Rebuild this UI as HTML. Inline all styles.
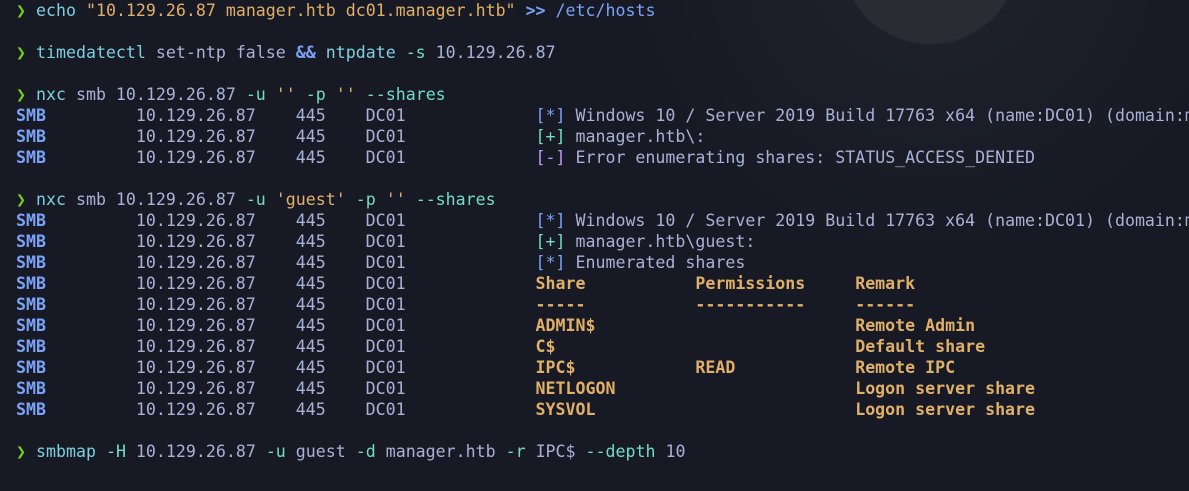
<!DOCTYPE html>
<html><head><meta charset="utf-8"><style>
html,body{margin:0;padding:0;width:1189px;height:491px;overflow:hidden;background:#171a24;}
.bg{position:absolute;inset:0;background:radial-gradient(circle at 930px -45px,#2a2d34 0,#292c33 88px,rgba(30,33,43,0.9) 90px,rgba(23,26,36,0) 300px),#171a24;}
pre{position:absolute;left:16px;top:0;width:1173px;overflow:hidden;margin:0;font-family:"DejaVu Sans Mono","Liberation Mono",monospace;font-size:16.6px;line-height:21px;color:#a9b1d6;white-space:pre;}
.p{color:#73d216}.c{color:#7dcfe0}.s{color:#e0af68}.b{color:#7aa2f7}.t{color:#73daca}.v{color:#bb9af7}
.smb{color:#7aa2f7;font-weight:bold}.y{color:#e0af68;font-weight:bold}.o{color:#7aa2f7;font-weight:bold}
</style></head><body><div class="bg"></div>
<pre><span class="p">❯</span> <span class="c">echo</span> <span class="s">"10.129.26.87 manager.htb dc01.manager.htb"</span> <span class="o">&gt;&gt;</span> <span class="b">/etc/hosts</span>

<span class="p">❯</span> <span class="c">timedatectl</span> set-ntp false <span class="o">&amp;&amp;</span> <span class="c">ntpdate</span> <span class="t">-s</span> 10.129.26.87

<span class="p">❯</span> <span class="c">nxc</span> smb 10.129.26.87 <span class="t">-u</span> <span class="s">''</span> <span class="t">-p</span> <span class="s">''</span> <span class="t">--shares</span>
<span class="smb">SMB</span>         10.129.26.87    445    DC01             <span class="b">[*]</span> Windows 10 / Server 2019 Build 17763 x64 (name:DC01) (domain:m
<span class="smb">SMB</span>         10.129.26.87    445    DC01             <span class="t">[+]</span> manager.htb\:
<span class="smb">SMB</span>         10.129.26.87    445    DC01             <span class="v">[-]</span> Error enumerating shares: STATUS_ACCESS_DENIED

<span class="p">❯</span> <span class="c">nxc</span> smb 10.129.26.87 <span class="t">-u</span> <span class="s">'guest'</span> <span class="t">-p</span> <span class="s">''</span> <span class="t">--shares</span>
<span class="smb">SMB</span>         10.129.26.87    445    DC01             <span class="b">[*]</span> Windows 10 / Server 2019 Build 17763 x64 (name:DC01) (domain:m
<span class="smb">SMB</span>         10.129.26.87    445    DC01             <span class="t">[+]</span> manager.htb\guest:
<span class="smb">SMB</span>         10.129.26.87    445    DC01             <span class="b">[*]</span> Enumerated shares
<span class="smb">SMB</span>         10.129.26.87    445    DC01             <span class="y">Share           Permissions     Remark</span>
<span class="smb">SMB</span>         10.129.26.87    445    DC01             <span class="y">-----           -----------     ------</span>
<span class="smb">SMB</span>         10.129.26.87    445    DC01             <span class="y">ADMIN$                          Remote Admin</span>
<span class="smb">SMB</span>         10.129.26.87    445    DC01             <span class="y">C$                              Default share</span>
<span class="smb">SMB</span>         10.129.26.87    445    DC01             <span class="y">IPC$            READ            Remote IPC</span>
<span class="smb">SMB</span>         10.129.26.87    445    DC01             <span class="y">NETLOGON                        Logon server share</span>
<span class="smb">SMB</span>         10.129.26.87    445    DC01             <span class="y">SYSVOL                          Logon server share</span>

<span class="p">❯</span> <span class="c">smbmap</span> <span class="t">-H</span> 10.129.26.87 <span class="t">-u</span> guest <span class="t">-d</span> manager.htb <span class="t">-r</span> IPC$ <span class="t">--depth</span> 10
</pre>
</body></html>
